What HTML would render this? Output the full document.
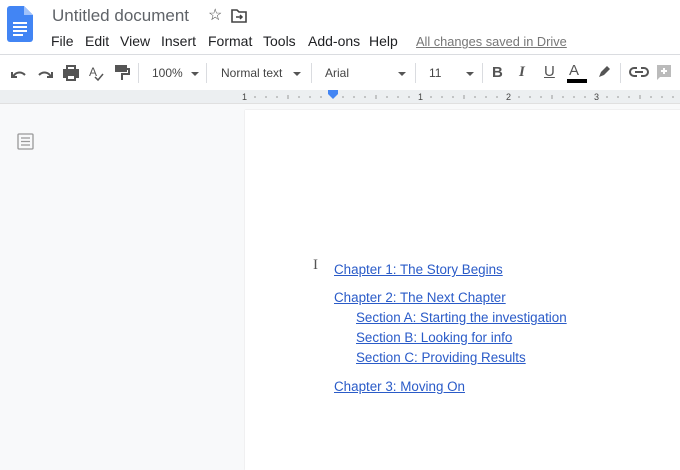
<!DOCTYPE html>
<html><head><style>
body{margin:0;width:680px;height:457px;overflow:hidden;background:#f8f9fa;font-family:"Liberation Sans",Arial,sans-serif;position:relative}
.a{position:absolute}
.top{left:0;top:0;width:680px;height:54px;background:#fff;border-bottom:1px solid #dadce0}
.tb{left:0;top:55px;width:680px;height:35px;background:#fff}
.ruler{left:0;top:90px;width:680px;height:13px;background:#eceff1;border-bottom:1px solid #e0e0e0}
.page{left:245px;top:110px;width:440px;height:360px;background:#fff;box-shadow:0 0 1px #ccc}
.menu span{position:absolute;top:33px;font-size:14px;color:#202124}
.t{font-size:12px;color:#444;top:66px}
.l{position:absolute;font-size:13.4px;color:#2a5bc8;text-decoration:underline;white-space:nowrap}
.sep{position:absolute;top:63px;width:1px;height:20px;background:#dadce0}
.caret{position:absolute;top:72px;width:0;height:0;border-left:4px solid transparent;border-right:4px solid transparent;border-top:4px solid #555}
</style></head><body>
<div class="a top"></div>
<svg class="a" style="left:7px;top:6px" width="26" height="36" viewBox="0 0 26 36"><path d="M3 0h14l9 9v24a3 3 0 0 1-3 3H3a3 3 0 0 1-3-3V3a3 3 0 0 1 3-3z" fill="#4285f4"/><path d="M17 0v9h9z" fill="#a1c2fa"/><rect x="6" y="16" width="14" height="2" fill="#fff"/><rect x="6" y="20" width="14" height="2" fill="#fff"/><rect x="6" y="24" width="14" height="2" fill="#fff"/><rect x="6" y="28" width="10" height="2" fill="#fff"/></svg>
<div class="a" style="left:52px;top:6px;font-size:17px;color:#5f6368">Untitled document</div>
<div class="a" style="left:208px;top:5px;font-size:16px;color:#444">☆</div>
<svg class="a" style="left:231px;top:9px" width="16" height="14" viewBox="0 0 16 14"><path d="M1 1h5l2 2h7v10H1z" fill="none" stroke="#444" stroke-width="1.6"/><path d="M5 8h6M9 6l2 2-2 2" fill="none" stroke="#444" stroke-width="1.5"/></svg>
<div class="menu"><span style="left:51px">File</span><span style="left:85px">Edit</span><span style="left:120px">View</span><span style="left:161px">Insert</span><span style="left:208px">Format</span><span style="left:263px">Tools</span><span style="left:308px">Add-ons</span><span style="left:369px">Help</span><span style="left:416px;color:#777;text-decoration:underline;font-size:12.8px;top:34px">All changes saved in Drive</span></div>
<div class="a tb"></div>
<svg class="a" style="left:8px;top:64px" width="130" height="18" viewBox="0 0 130 18" fill="none" stroke="#555" stroke-width="2"><path d="M5 13c2-5 8-6 12-2M4 8v5h5"/><path d="M43 13c-2-5-8-6-12-2M44 8v5h-5"/><rect x="56" y="6" width="14" height="7" fill="#555"/><rect x="59" y="2" width="8" height="4"/><rect x="59" y="11" width="8" height="5" fill="#fff"/><text x="81" y="12" font-size="12" fill="#555" stroke="none" font-family="Liberation Sans">A</text><path d="M87 13l3 3 5-6" stroke-width="1.5"/><rect x="108" y="2" width="10" height="5" fill="#555"/><path d="M118 5h3v5h-7v6" stroke-width="2"/></svg>
<div class="sep" style="left:138px"></div>
<div class="a t" style="left:152px">100%</div><div class="caret" style="left:191px"></div>
<div class="sep" style="left:206px"></div>
<div class="a t" style="left:221px">Normal text</div><div class="caret" style="left:293px"></div>
<div class="sep" style="left:311px"></div>
<div class="a t" style="left:325px">Arial</div><div class="caret" style="left:398px"></div>
<div class="sep" style="left:415px"></div>
<div class="a t" style="left:429px">11</div><div class="caret" style="left:466px"></div>
<div class="sep" style="left:482px"></div>
<div class="a" style="left:492px;top:64px;font-size:15px;font-weight:bold;color:#555">B</div>
<div class="a" style="left:519px;top:64px;font-size:15px;font-style:italic;font-family:'Liberation Serif',serif;font-weight:bold;color:#555">I</div>
<div class="a" style="left:544px;top:63px;font-size:15px;color:#555;text-decoration:underline">U</div>
<div class="a" style="left:569px;top:62px;font-size:15px;color:#555">A</div>
<div class="a" style="left:567px;top:79px;width:20px;height:4px;background:#000"></div>
<svg class="a" style="left:596px;top:64px" width="16" height="16" viewBox="0 0 16 16"><path d="M3 13l2-5 6-6 3 3-6 6z" fill="#555"/></svg>
<div class="sep" style="left:620px"></div>
<svg class="a" style="left:629px;top:66px" width="20" height="12" viewBox="0 0 20 12" fill="none" stroke="#555" stroke-width="2"><path d="M8 2H5a4 4 0 0 0 0 8h3M12 2h3a4 4 0 0 1 0 8h-3M6 6h8"/></svg>
<svg class="a" style="left:656px;top:64px" width="16" height="17" viewBox="0 0 16 17"><path d="M1 1h14v12H4l-3 3z" fill="#bbb"/><path d="M8 4v6M5 7h6" stroke="#fff" stroke-width="2"/></svg>
<div class="a ruler"></div>
<svg class="a" style="left:0;top:90px" width="680" height="13"><g font-size="9" fill="#444" font-family="Liberation Sans"><text x="242" y="10">1</text><text x="418" y="10">1</text><text x="506" y="10">2</text><text x="594" y="10">3</text></g><g stroke="#999"><path d="M255 6v2M266 6v2M277 6v2M288 5v4M299 6v2M310 6v2M321 6v2M343 6v2M354 6v2M365 6v2M376 5v4M387 6v2M398 6v2M409 6v2M431 6v2M442 6v2M453 6v2M464 5v4M475 6v2M486 6v2M497 6v2M519 6v2M530 6v2M541 6v2M552 5v4M563 6v2M574 6v2M585 6v2M607 6v2M618 6v2M629 6v2M640 5v4M651 6v2M662 6v2M673 6v2"/></g><path d="M328 0h10v4l-5 5-5-5z" fill="#4285f4"/></svg>
<svg class="a" style="left:17px;top:133px" width="17" height="17" viewBox="0 0 17 17" fill="none" stroke="#999" stroke-width="1.3"><rect x="1" y="1" width="15" height="15" rx="1"/><path d="M4 5h9M4 8.5h9M4 12h9"/></svg>
<div class="a page"></div>
<div class="a" style="left:313px;top:257px;font-size:15px;color:#555;font-family:'Liberation Serif',serif">I</div>
<span class="l" style="left:334px;top:262px">Chapter 1: The Story Begins</span>
<span class="l" style="left:334px;top:290px">Chapter 2: The Next Chapter</span>
<span class="l" style="left:356px;top:310px">Section A: Starting the investigation</span>
<span class="l" style="left:356px;top:330px">Section B: Looking for info</span>
<span class="l" style="left:356px;top:350px">Section C: Providing Results</span>
<span class="l" style="left:334px;top:379px">Chapter 3: Moving On</span>
</body></html>
